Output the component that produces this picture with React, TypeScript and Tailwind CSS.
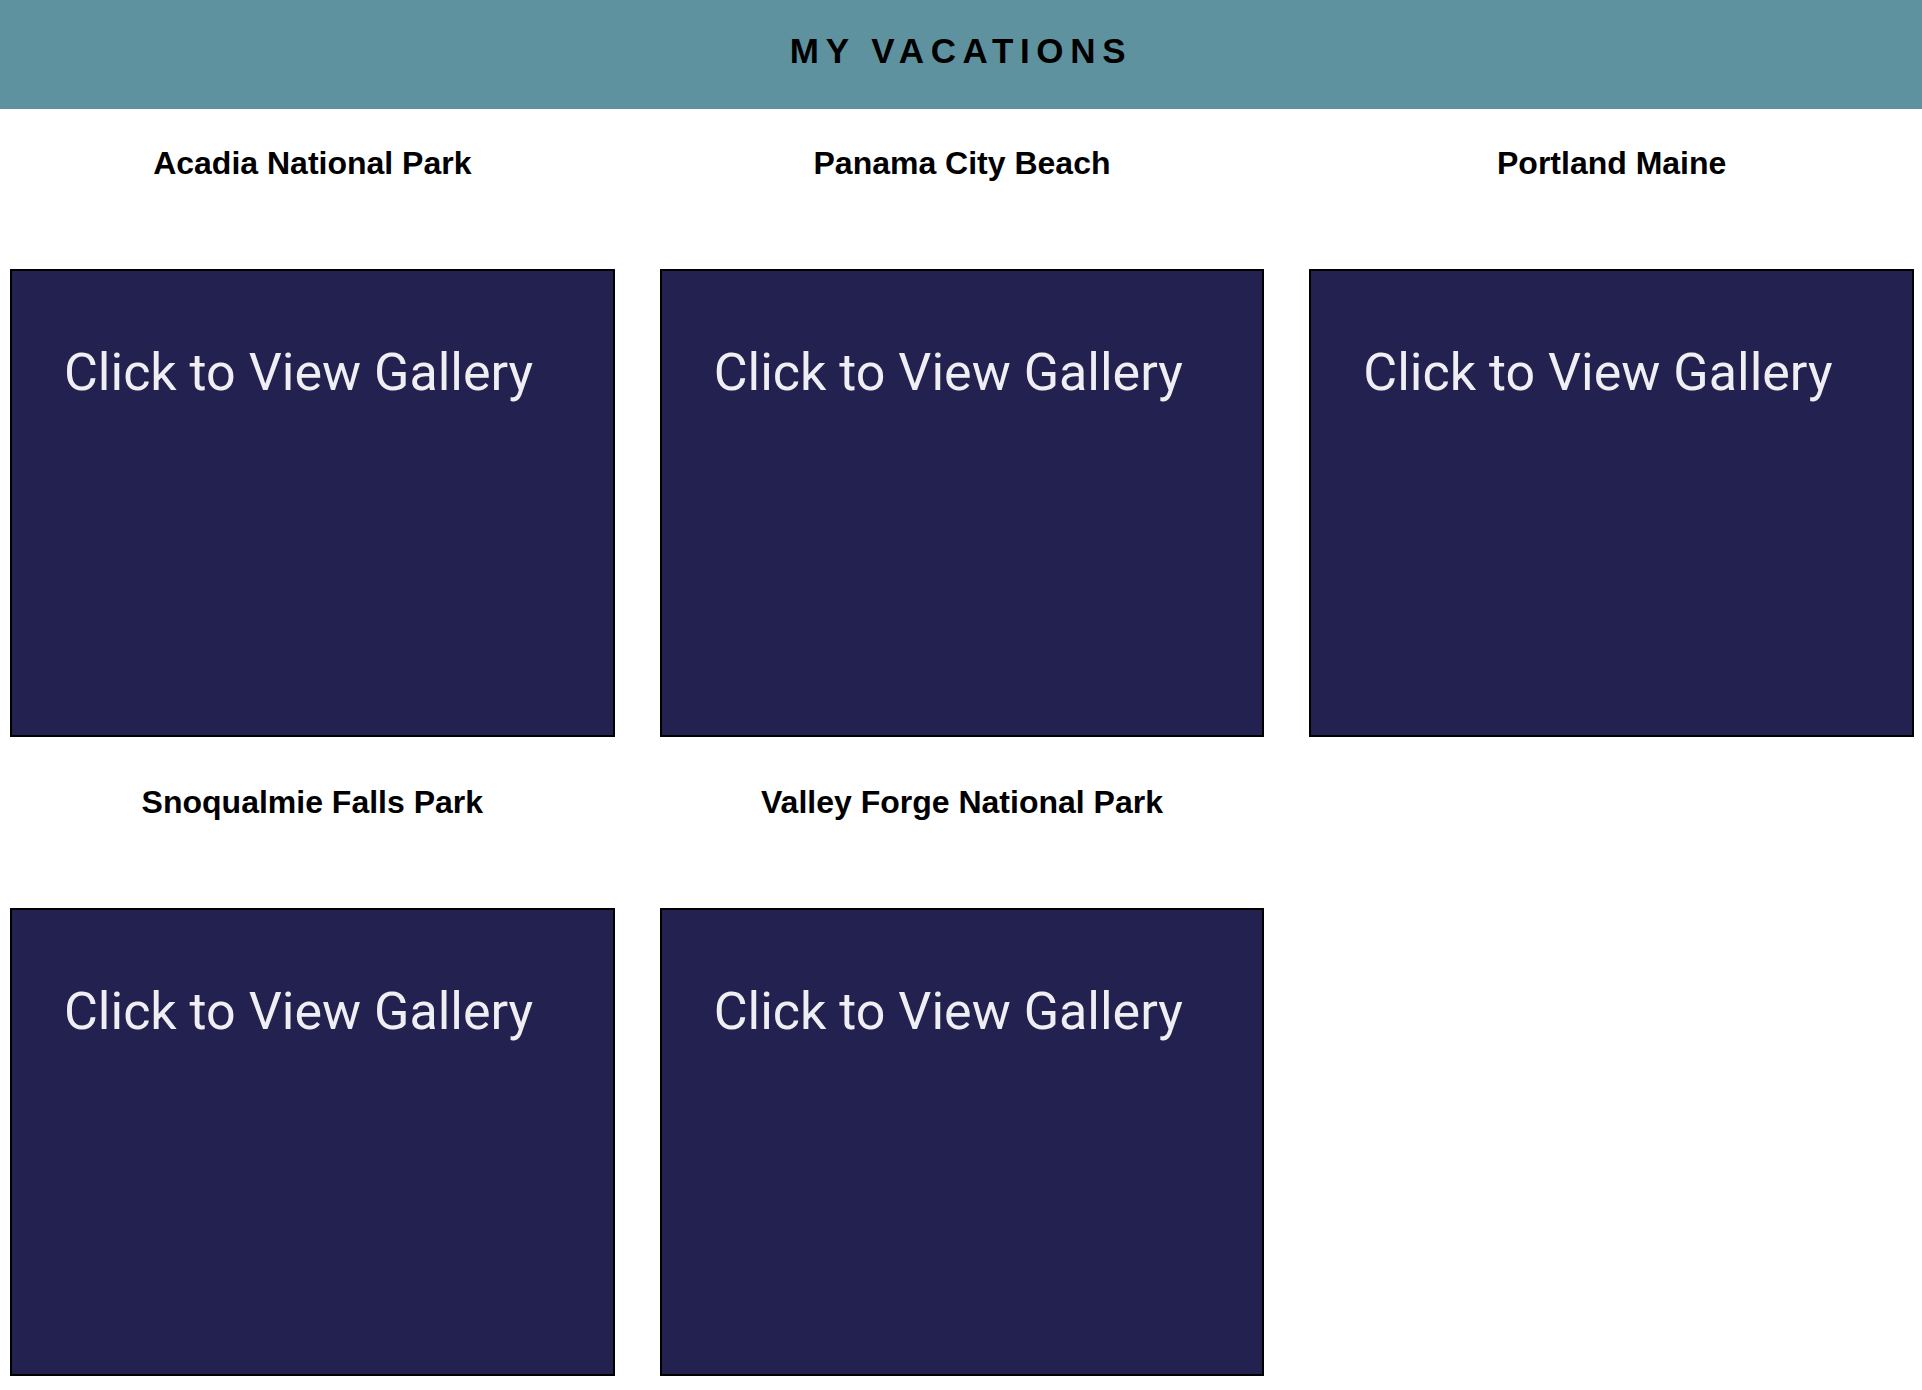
const vacations = [
  'Acadia National Park',
  'Panama City Beach',
  'Portland Maine',
  'Snoqualmie Falls Park',
  'Valley Forge National Park',
];

function VacationCard({ title }: { title: string }) {
  return (
    <div className="flex flex-col">
      <h3 className="mt-[36px] mb-[87px] text-center font-['Liberation_Sans',Arial,sans-serif] text-[32px] leading-[37px] font-bold text-black">
        {title}
      </h3>
      <a
        href="#"
        className="block h-[468px] border-2 border-black bg-[#23214f] pl-[52px] pt-[71px] font-['Roboto',sans-serif] text-[52px] leading-[61px] text-[#efeef2]"
      >
        Click to View Gallery
      </a>
    </div>
  );
}

export default function App() {
  return (
    <div className="min-h-screen bg-white">
      <header className="flex h-[109px] items-start justify-center bg-[#5f929f] pt-[31px]">
        <h1 className="font-['Liberation_Sans',Arial,sans-serif] text-[35px] leading-[40px] font-bold tracking-[0.19em] text-black">
          MY VACATIONS
        </h1>
      </header>
      <main className="grid grid-cols-3 gap-x-[45px] gap-y-[11px] pl-[10px] pr-[8px] pb-[14px]">
        {vacations.map((v) => (
          <VacationCard key={v} title={v} />
        ))}
      </main>
    </div>
  );
}
